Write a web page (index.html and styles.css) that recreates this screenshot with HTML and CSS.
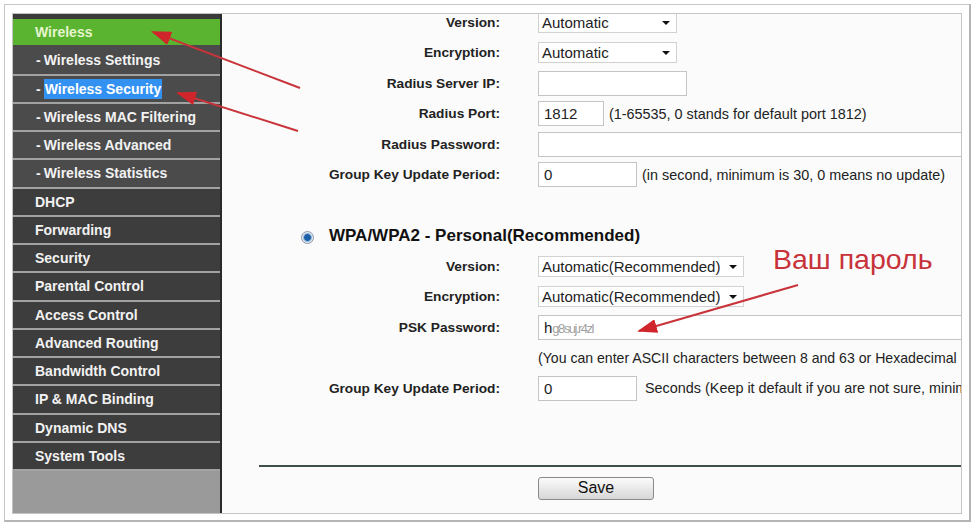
FILE: index.html
```html
<!DOCTYPE html>
<html lang="en">
  <head>
    <meta charset="utf-8" />
    <title>Wireless Security</title>
    <link rel="stylesheet" href="styles.css">
  </head>
  <body>
    <div class="frame">
      <div class="panel">
        <!-- Sidebar menu -->
        <aside class="sidebar">
          <ul class="menu">
            <li class="menu__item menu__item--active">Wireless</li>
            <li class="menu__item menu__item--sub"><span class="dash">-</span>Wireless Settings</li>
            <li class="menu__item menu__item--sub"><span class="dash">-</span><span class="sel">Wireless Security</span></li>
            <li class="menu__item menu__item--sub"><span class="dash">-</span>Wireless MAC Filtering</li>
            <li class="menu__item menu__item--sub"><span class="dash">-</span>Wireless Advanced</li>
            <li class="menu__item menu__item--sub"><span class="dash">-</span>Wireless Statistics</li>
            <li class="menu__item">DHCP</li>
            <li class="menu__item">Forwarding</li>
            <li class="menu__item">Security</li>
            <li class="menu__item">Parental Control</li>
            <li class="menu__item">Access Control</li>
            <li class="menu__item">Advanced Routing</li>
            <li class="menu__item">Bandwidth Control</li>
            <li class="menu__item">IP &amp; MAC Binding</li>
            <li class="menu__item">Dynamic DNS</li>
            <li class="menu__item">System Tools</li>
          </ul>
        </aside>

        <!-- Main form -->
        <main class="content">
          <div class="form">
            <div class="row">
              <div class="label">Version:</div>
              <div class="field"><div class="select">Automatic</div></div>
            </div>
            <div class="row">
              <div class="label">Encryption:</div>
              <div class="field"><div class="select">Automatic</div></div>
            </div>
            <div class="row">
              <div class="label">Radius Server IP:</div>
              <div class="field"><div class="input input--ip"></div></div>
            </div>
            <div class="row">
              <div class="label">Radius Port:</div>
              <div class="field"><div class="input input--port">1812</div><span class="hint">(1-65535, 0 stands for default port 1812)</span></div>
            </div>
            <div class="row">
              <div class="label">Radius Password:</div>
              <div class="field field--wide"><div class="input input--wide"></div></div>
            </div>
            <div class="row">
              <div class="label">Group Key Update Period:</div>
              <div class="field"><div class="input input--period">0</div><span class="hint">(in second, minimum is 30, 0 means no update)</span></div>
            </div>
            <div class="row"></div>
            <div class="row row--heading">
              <span class="radio"></span>
              <span class="heading">WPA/WPA2 - Personal(Recommended)</span>
            </div>
            <div class="row">
              <div class="label">Version:</div>
              <div class="field"><div class="select select--long">Automatic(Recommended)</div></div>
            </div>
            <div class="row">
              <div class="label">Encryption:</div>
              <div class="field"><div class="select select--long">Automatic(Recommended)</div></div>
            </div>
            <div class="row">
              <div class="label">PSK Password:</div>
              <div class="field field--wide"><div class="input input--wide">h<span class="blur">g8suj.r4zl</span></div></div>
            </div>
            <div class="row">
              <div class="label"></div>
              <div class="field field--wide"><span class="hint hint--note">(You can enter ASCII characters between 8 and 63 or Hexadecimal</span></div>
            </div>
            <div class="row">
              <div class="label">Group Key Update Period:</div>
              <div class="field field--wide"><div class="input input--period">0</div><span class="hint hint--far">Seconds (Keep it default if you are not sure, minimum is 30, 0 means no update)</span></div>
            </div>
          </div>

          <div class="divider"></div>
          <div class="actions">
            <button class="btn">Save</button>
          </div>
        </main>
      </div>
    </div>

    <!-- Annotations drawn over the screenshot -->
    <div class="note">Ваш пароль</div>
    <svg class="arrows" width="975" height="526" viewBox="0 0 975 526">
      <defs>
        <marker id="head" viewBox="0 0 20 14" refX="18" refY="7" markerWidth="20" markerHeight="14" markerUnits="userSpaceOnUse" orient="auto">
          <path d="M0,0 L20,7 L0,14 Z" fill="#d0252b"/>
        </marker>
      </defs>
      <line x1="300" y1="88" x2="153" y2="32" stroke="#c8343a" stroke-width="2" marker-end="url(#head)"/>
      <line x1="298" y1="131" x2="178" y2="93" stroke="#c8343a" stroke-width="2" marker-end="url(#head)"/>
      <line x1="798" y1="285" x2="639" y2="331" stroke="#c8343a" stroke-width="2" marker-end="url(#head)"/>
    </svg>
  </body>
</html>
```

FILE: styles.css
```css
/* Base */
html { box-sizing: border-box; }
*, *:before, *:after { box-sizing: inherit; }
body {
  margin: 0;
  width: 975px;
  height: 526px;
  position: relative;
  overflow: hidden;
  background: #fff;
  font-family: "Liberation Sans", Arial, sans-serif;
  color: #222;
}
/* Frame */
.frame {
  margin: 4px;
  height: 518px;
  border: 1px solid #c6c6c6;
  border-right: 2px solid #b4b4b4;
  border-bottom: 2px solid #b4b4b4;
  padding: 8px 7px 6px 7px;
}
.panel {
  display: flex;
  height: 100%;
  border: 1px solid #c4c4c4;
  overflow: hidden;
}
/* Sidebar */
.sidebar {
  width: 209px;
  flex: none;
  background: #9a9a9a;
  border-right: 2px solid #2a2a2a;
}
.menu {
  list-style: none;
  margin: 0;
  padding: 0;
  border-top: 5px solid #3a3a3a;
}
.menu__item {
  height: 28.25px;
  line-height: 26.25px;
  padding-left: 22px;
  background: #3d3d3d;
  border-bottom: 2px solid #a2a2a2;
  color: #f2f2f2;
  font-weight: bold;
  font-size: 14px;
  white-space: nowrap;
}
.menu__item--sub {
  background: #4b4b4b;
  padding-left: 23px;
}
.menu__item--active {
  background: #5ab430;
  color: #e6f5cf;
  border-bottom-color: #4a4a4a;
}
.dash {
  margin-right: 3px;
}
.sel {
  background: #3391f2;
  color: #fff;
  padding: 2px 1px;
}
/* Content */
.content {
  flex: 1;
  background: #fbfbfb;
  overflow: hidden;
}
.form {
  margin-top: -7px;
}
.row {
  display: flex;
  align-items: center;
  height: 30.5px;
  white-space: nowrap;
}
.label {
  width: 278px;
  flex: none;
  text-align: right;
  font-weight: bold;
  font-size: 13.7px;
  color: #222;
}
.field {
  margin-left: 38px;
  display: flex;
  align-items: center;
}
.field--wide {
  flex: 1;
  min-width: 0;
  margin-right: -12px;
}
.select {
  position: relative;
  width: 139px;
  height: 21px;
  line-height: 19px;
  padding-left: 3px;
  background: #fff;
  border: 1px solid #d2d2d2;
  font-size: 15px;
  color: #222;
}
.select:after {
  content: "";
  position: absolute;
  right: 6px;
  top: 8px;
  border-left: 4px solid transparent;
  border-right: 4px solid transparent;
  border-top: 4px solid #111;
}
.select--long { width: 206px; }
.input {
  height: 25px;
  line-height: 23px;
  padding-left: 5px;
  background: #fff;
  border: 1px solid #c4c4c4;
  font-size: 15px;
  color: #222;
  flex: none;
}
.input--ip { width: 149px; }
.input--port { width: 66px; }
.input--period { width: 99px; }
.input--wide { width: 100%; flex: 1; }
.blur { color: #a0a0a0; letter-spacing: -1.5px; font-size: 13px; }
.hint {
  margin-left: 5px;
  font-size: 14.4px;
  color: #222;
}
.field--wide > .hint:first-child { margin-left: 0; }
.hint--note { font-size: 14.1px; }
.hint--far { margin-left: 8px; }
/* WPA heading */
.row--heading {
  padding-left: 79px;
}
.radio {
  width: 13px;
  height: 13px;
  border-radius: 50%;
  border: 1px solid #8b98a6;
  background: radial-gradient(circle, #1d5fa6 0 3px, #6d9cc9 3.5px, #e4ebf2 5px);
  margin-right: 15px;
  margin-top: 4px;
}
.heading {
  font-weight: bold;
  font-size: 17px;
  color: #111;
}
/* Footer */
.divider {
  margin: 61px 0 0 37px;
  height: 2px;
  background: #3d4f49;
}
.actions {
  padding: 10px 0 0 316px;
}
.btn {
  width: 116px;
  height: 23px;
  padding: 0;
  border: 1px solid #8a8a8a;
  border-radius: 3px;
  background: linear-gradient(#fbfbfb, #e9e9e9 50%, #d6d6d6);
  font-family: "Liberation Sans", Arial, sans-serif;
  font-size: 16px;
  color: #111;
}
/* Annotations */
.note {
  position: absolute;
  left: 773px;
  top: 243px;
  font-family: "Liberation Sans", Arial, sans-serif;
  font-size: 28.5px;
  color: #c8323a;
}
.arrows {
  position: absolute;
  top: 0;
  left: 0;
  pointer-events: none;
}
```
